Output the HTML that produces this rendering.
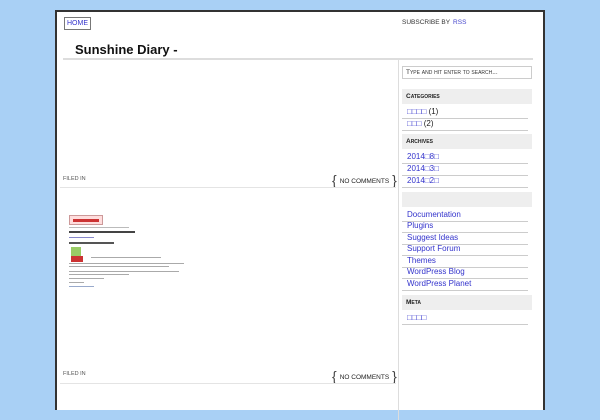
<!DOCTYPE html>
<html><head><meta charset="utf-8"><style>
*{margin:0;padding:0;box-sizing:border-box}
body{width:600px;height:400px;overflow:hidden;background:#a9d0f5;font-family:"Liberation Sans","Noto Sans CJK JP",sans-serif;position:relative}
#wrap{position:absolute;left:55px;top:10px;width:490px;height:400px;background:#fff;border:2px solid #333;border-bottom:none}
.abs{position:absolute}
.home{left:7px;top:5px;border:1px solid #777;font-size:7px;color:#33c;padding:2px 2px}
.sub{left:345px;top:7px;font-size:6.5px;color:#333}
.sub span{color:#44c;margin-left:3px}
h1{position:absolute;left:18px;top:30px;font-size:13px;font-weight:bold;color:#111}
.hline{left:6px;top:46px;width:470px;height:2px;background:#ddd}
.vline{left:341px;top:48px;width:1px;height:360px;background:#ddd}
.filed{font-size:5.5px;color:#555}
.nc{font-size:6.5px;color:#222;white-space:nowrap}
.nc b{font-weight:normal;font-size:14px;color:#444;vertical-align:-2px;margin:0 3px}
.pl{left:3px;width:336px;height:1px;background:#e4e4e4}
.s{position:absolute;left:402px;width:130px}
.search{border:1px solid #ccc;height:13px;font-size:6.5px;color:#333;padding:2px 3px;font-variant:small-caps}
.hd{background:#eee;height:15px;font-size:6.5px;font-weight:bold;color:#222;padding:4px 4px;font-variant:small-caps}
.li{height:11.5px;border-bottom:1px solid #ccc;font-size:8px;color:#33c;padding-left:5px;line-height:10px;width:126px}
.li span{color:#222}
</style></head><body>
<div id="wrap">
<div class="abs home">HOME</div>
<div class="abs sub">SUBSCRIBE BY<span>RSS</span></div>
<h1>Sunshine Diary -</h1>
<div class="abs hline"></div>
<div class="abs vline"></div>

<div class="abs filed" style="left:6px;top:164px">FILED IN</div>
<div class="abs nc" style="left:272px;top:160px"><b>{</b>NO COMMENTS<b>}</b></div>
<div class="abs pl" style="top:175px"></div>

<div class="abs" style="left:12px;top:203px;width:34px;height:10px;border:1px solid #c99;background:#fdd"><div style="margin:3px 3px;height:3px;background:#c33"></div></div>
<div class="abs" style="left:12px;top:215px;width:60px;height:1px;background:#bbb"></div>
<div class="abs" style="left:12px;top:219px;width:66px;height:2px;background:#444"></div>
<div class="abs" style="left:12px;top:225px;width:25px;height:1px;background:#88c"></div>
<div class="abs" style="left:12px;top:230px;width:45px;height:2px;background:#555"></div>
<div class="abs" style="left:14px;top:235px;width:10px;height:12px;background:#9c6"></div>
<div class="abs" style="left:14px;top:244px;width:12px;height:6px;background:#c33"></div>
<div class="abs" style="left:34px;top:245px;width:70px;height:1px;background:#aaa"></div>
<div class="abs" style="left:12px;top:251px;width:115px;height:1px;background:#aaa"></div>
<div class="abs" style="left:12px;top:254px;width:100px;height:1px;background:#aaa"></div>
<div class="abs" style="left:12px;top:259px;width:110px;height:1px;background:#aaa"></div>
<div class="abs" style="left:12px;top:262px;width:60px;height:1px;background:#aaa"></div>
<div class="abs" style="left:12px;top:266px;width:35px;height:1px;background:#aaa"></div>
<div class="abs" style="left:12px;top:270px;width:15px;height:1px;background:#aaa"></div>
<div class="abs" style="left:12px;top:274px;width:25px;height:1px;background:#9ac"></div>

<div class="abs filed" style="left:6px;top:359px">FILED IN</div>
<div class="abs nc" style="left:272px;top:356px"><b>{</b>NO COMMENTS<b>}</b></div>
<div class="abs pl" style="top:371px"></div>
</div>

<div class="s search" style="top:66px">Type and hit enter to search...</div>
<div class="s hd" style="top:89px">Categories</div>
<div class="s li" style="top:107px">□□□□ <span>(1)</span></div>
<div class="s li" style="top:119px">□□□ <span>(2)</span></div>
<div class="s hd" style="top:134px">Archives</div>
<div class="s li" style="top:152px">2014□8□</div>
<div class="s li" style="top:164px">2014□3□</div>
<div class="s li" style="top:176px">2014□2□</div>
<div class="s hd" style="top:192px"></div>
<div class="s li" style="top:210px">Documentation</div>
<div class="s li" style="top:221px">Plugins</div>
<div class="s li" style="top:233px">Suggest Ideas</div>
<div class="s li" style="top:244px">Support Forum</div>
<div class="s li" style="top:256px">Themes</div>
<div class="s li" style="top:267px">WordPress Blog</div>
<div class="s li" style="top:279px">WordPress Planet</div>
<div class="s hd" style="top:295px">Meta</div>
<div class="s li" style="top:313px">□□□□</div>
</body></html>
